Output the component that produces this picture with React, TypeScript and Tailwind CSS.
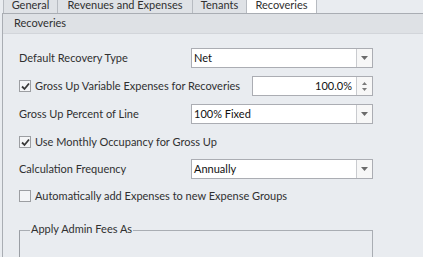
import { ReactNode } from "react";

const FONT = "font-['Lato','Liberation_Sans',sans-serif] text-[11px] text-[#303030]";

function DropButton() {
  return (
    <div className="flex w-[16px] items-center justify-center self-stretch border-l border-[#c9cbcf] bg-[#f7f7f7]">
      <svg width="7" height="4" viewBox="0 0 7 4">
        <path d="M0 0h7L3.5 4z" fill="#6b6b6b" />
      </svg>
    </div>
  );
}

function SpinButton() {
  return (
    <div className="flex w-[16px] flex-col items-center justify-center gap-[3px] self-stretch border-l border-[#c9cbcf] bg-[#f7f7f7]">
      <svg width="5" height="3" viewBox="0 0 5 3">
        <path d="M0 3h5L2.5 0z" fill="#7a7a7a" />
      </svg>
      <svg width="5" height="3" viewBox="0 0 5 3">
        <path d="M0 0h5L2.5 3z" fill="#7a7a7a" />
      </svg>
    </div>
  );
}

function Combo({ value }: { value: string }) {
  return (
    <div className="flex h-[20px] w-[182px] items-center border border-[#abadb3] bg-white">
      <span className="flex-1 pl-[2px] text-[#111]">{value}</span>
      <DropButton />
    </div>
  );
}

function Check({ checked, label }: { checked: boolean; label: string }) {
  return (
    <div className="flex items-center gap-[4px]">
      <div className="flex h-[12px] w-[12px] items-center justify-center border border-[#9c9ea2] bg-[#f4f5f7]">
        {checked && (
          <svg width="9" height="9" viewBox="0 0 9 9">
            <path d="M1 4.5L3.5 7L8 1.5" stroke="#3a3a3a" strokeWidth="1.8" fill="none" />
          </svg>
        )}
      </div>
      <span>{label}</span>
    </div>
  );
}

function Row({ label, children, top }: { label: ReactNode; children?: ReactNode; top: string }) {
  return (
    <div className={`flex h-[20px] items-center ${top}`}>
      <div className="flex-1">{label}</div>
      {children}
    </div>
  );
}

const tabs = [
  { t: "General", w: "w-[55px]" },
  { t: "Revenues and Expenses", w: "w-[136px]" },
  { t: "Tenants", w: "w-[55px]" },
];

export default function App() {
  return (
    <div className={`h-[257px] w-[423px] overflow-hidden bg-[#e9ecf0] ${FONT}`}>
      <div className="flex h-[13px] items-end overflow-hidden pl-[3px]">
        {tabs.map(({ t, w }) => (
          <div
            key={t}
            className={`flex h-[21px] ${w} items-center justify-center border border-b-0 border-[#b7bbc1] bg-[#dfe2e6] pt-[4px] -mr-px`}
          >
            {t}
          </div>
        ))}
        <div className="flex h-[21px] w-[71px] items-center justify-center border border-b-0 border-[#b7bbc1] bg-white pt-[4px]">
          Recoveries
        </div>
      </div>
      <div className="ml-[2px] h-[244px] border-l border-t border-[#a9adb3]">
        <div className="flex h-[20px] items-center border-b border-[#d2d5da] bg-[#dee1e5] pl-[11px]">
          Recoveries
        </div>
        <div className="flex w-[370px] flex-col pl-[16px]">
          <Row top="mt-[14px]" label="Default Recovery Type">
            <Combo value="Net" />
          </Row>
          <Row top="mt-[8px]" label={<Check checked label="Gross Up Variable Expenses for Recoveries" />}>
            <div className="flex h-[20px] w-[121px] items-center border border-[#abadb3] bg-white">
              <span className="flex-1 pr-[4px] text-right text-[#111]">100.0%</span>
              <SpinButton />
            </div>
          </Row>
          <Row top="mt-[8px]" label="Gross Up Percent of Line">
            <Combo value="100% Fixed" />
          </Row>
          <Row top="mt-[8px]" label={<Check checked label="Use Monthly Occupancy for Gross Up" />} />
          <Row top="mt-[7px]" label="Calculation Frequency">
            <Combo value="Annually" />
          </Row>
          <Row top="mt-[7px]" label={<Check checked={false} label="Automatically add Expenses to new Expense Groups" />} />
          <div className="mt-[24px] h-[60px] border border-[#a9adb3] border-l-[#9a9ea4]">
            <span className="relative -top-[10px] left-[10px] bg-[#e9ecf0] px-[1px]">Apply Admin Fees As</span>
          </div>
        </div>
      </div>
    </div>
  );
}
